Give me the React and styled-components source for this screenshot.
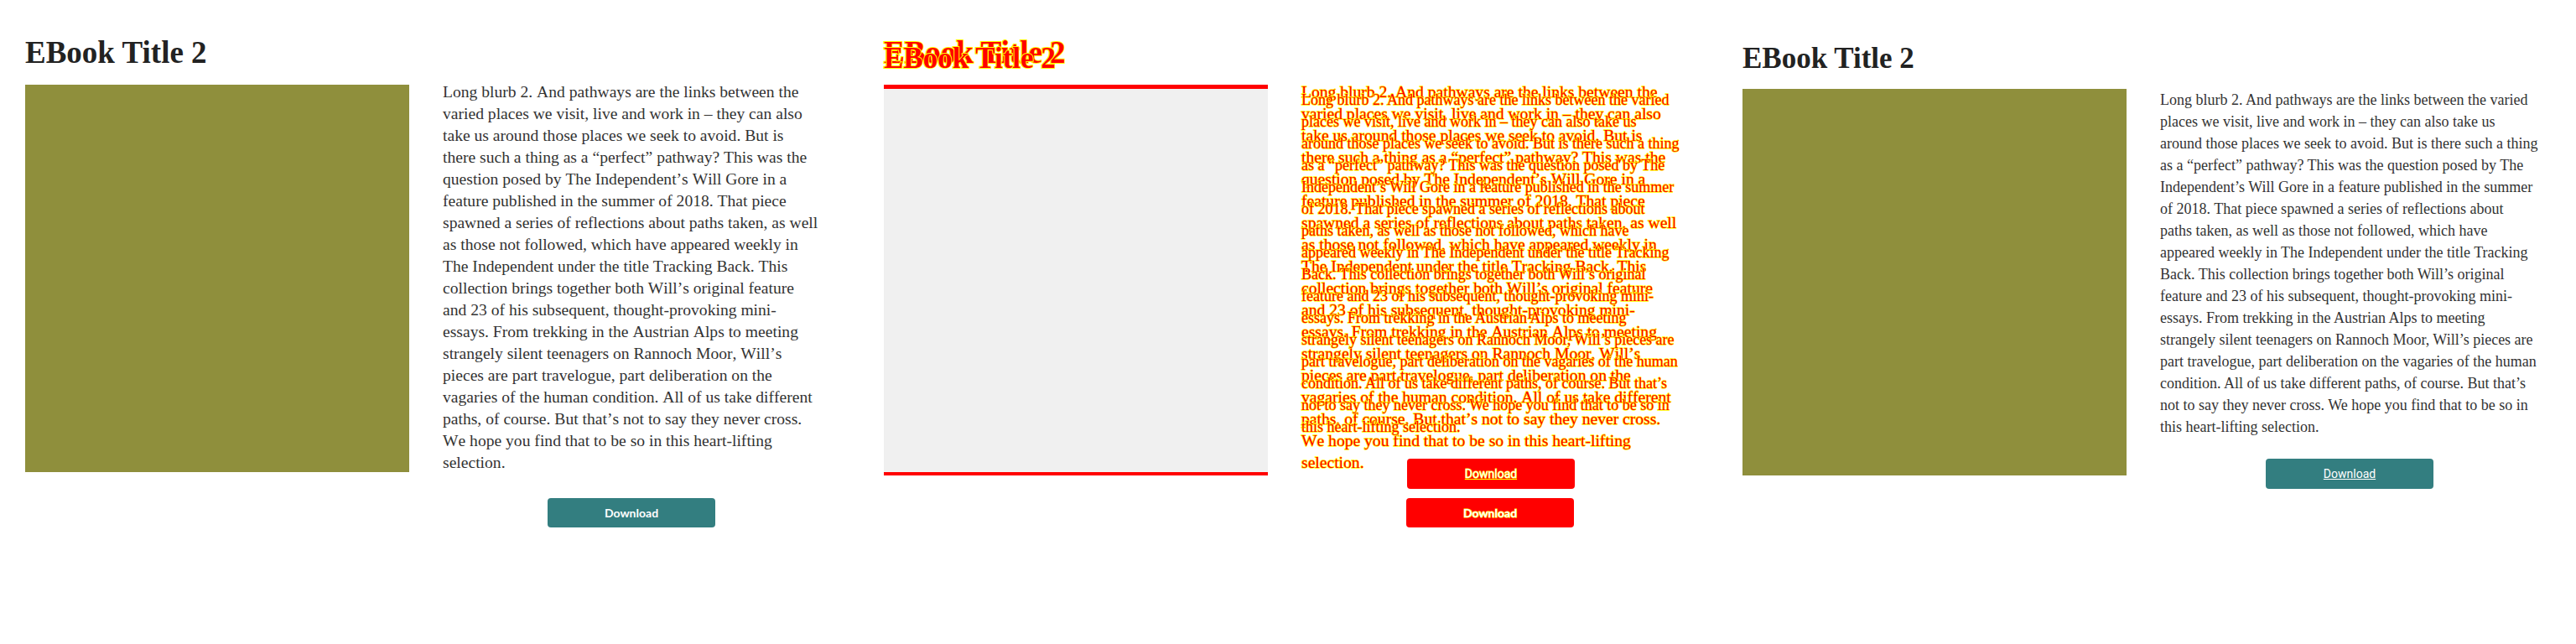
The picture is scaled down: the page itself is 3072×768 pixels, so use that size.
import styled, { createGlobalStyle, css } from "styled-components";

const GlobalStyle = createGlobalStyle`
  html, body {
    margin: 0;
    padding: 0;
    background: #ffffff;
  }
  body {
    width: 3072px;
    height: 768px;
    overflow: hidden;
  }
`;

const BLURB =
  "Long blurb 2. And pathways are the links between the varied places we visit, live and work in \u2013 they can also take us around those places we seek to avoid. But is there such a thing as a \u201cperfect\u201d pathway? This was the question posed by The Independent\u2019s Will Gore in a feature published in the summer of 2018. That piece spawned a series of reflections about paths taken, as well as those not followed, which have appeared weekly in The Independent under the title Tracking Back. This collection brings together both Will\u2019s original feature and 23 of his subsequent, thought-provoking mini-essays. From trekking in the Austrian Alps to meeting strangely silent teenagers on Rannoch Moor, Will\u2019s pieces are part travelogue, part deliberation on the vagaries of the human condition. All of us take different paths, of course. But that\u2019s not to say they never cross. We hope you find that to be so in this heart-lifting selection.";

// per-version measurements (expected = styled page, actual = unstyled fallback)
const look = {
  expected: {
    top: 44,
    titleSize: 37,
    titleGap: 20,
    titleSpacing: "0px",
    column: 450,
    blurbFont: '"Liberation Serif", "Times New Roman", serif',
    blurbSize: "19.6px",
    blurbKerning: "none",
    blurbShift: -4,
    coverHeight: 462,
    buttonFont: 'Lato, "Liberation Sans", sans-serif',
    buttonWeight: 700,
    buttonHeight: 35,
    underline: false,
  },
  actual: {
    top: 52,
    titleSize: 35,
    titleGap: 19,
    titleSpacing: "0px",
    column: 452,
    blurbFont: '"Liberation Serif", "Times New Roman", serif',
    blurbSize: "18px",
    blurbKerning: "auto",
    blurbShift: 0,
    coverHeight: 461,
    buttonFont: 'Roboto, "Liberation Sans", sans-serif',
    buttonWeight: 400,
    buttonHeight: 36,
    underline: true,
  },
};

const diffInk = css`
  color: #ff0000;
  -webkit-text-stroke: ${({ $stroke }) => $stroke || "1.4px"} #ffff00;
  paint-order: stroke fill;
`;

const Screen = styled.main`
  display: flex;
  width: 3072px;
  height: 768px;
  background: #ffffff;
`;

const Panel = styled.section`
  flex: none;
  width: 1024px;
  height: 768px;
  box-sizing: border-box;
  padding-left: 30px;
  display: grid;
  grid-template-columns: 1fr;
  align-items: start;
  overflow: hidden;
`;

// in the diff panel both versions sit in the same grid cell
const Layer = styled.div`
  grid-area: 1 / 1;
  padding-top: ${({ $v }) => look[$v].top}px;
`;

const Title = styled.h1`
  margin: 0 0 ${({ $v }) => look[$v].titleGap}px;
  font-family: "Liberation Serif", "Times New Roman", serif;
  font-weight: 700;
  font-size: ${({ $v }) => look[$v].titleSize}px;
  letter-spacing: ${({ $v }) => look[$v].titleSpacing};
  line-height: 1;
  color: #222222;
  ${({ $diff }) => $diff && diffInk}
`;

const Body = styled.div`
  display: grid;
  grid-template-columns: 458px ${({ $v }) => look[$v].column}px;
  column-gap: 40px;
  align-items: start;
`;

const Cover = styled.div`
  height: ${({ $v }) => look[$v].coverHeight}px;
  background: #8f8f3c;
`;

const DiffCover = styled.div`
  height: 457px;
  border-top: 5px solid #ff0000;
  border-bottom: 4px solid #ff0000;
  background: #f0f0f0;
`;

const Details = styled.div`
  display: flex;
  flex-direction: column;
`;

const Blurb = styled.p`
  margin: ${({ $v }) => look[$v].blurbShift}px 0 0;
  font-family: ${({ $v }) => look[$v].blurbFont};
  font-size: ${({ $v }) => look[$v].blurbSize};
  font-kerning: ${({ $v }) => look[$v].blurbKerning};
  line-height: 26px;
  color: #333333;
  ${({ $diff }) => $diff && diffInk}
`;

const DownloadButton = styled.a`
  align-self: center;
  margin-top: ${({ $v }) => 25 - look[$v].blurbShift}px;
  width: 200px;
  height: ${({ $v }) => look[$v].buttonHeight}px;
  display: flex;
  align-items: center;
  justify-content: center;
  border-radius: 4px;
  background: ${({ $diff }) => ($diff ? "#ff0000" : "#337e80")};
  color: #ffffff;
  font-family: ${({ $v }) => look[$v].buttonFont};
  font-weight: ${({ $v }) => look[$v].buttonWeight};
  font-size: 14px;
  text-decoration: ${({ $v }) => (look[$v].underline ? "underline" : "none")};
  ${({ $diff }) =>
    $diff &&
    css`
      -webkit-text-stroke: 1px #ffff00;
      paint-order: stroke fill;
    `}
`;

const Version = ({ v, diff, cover }) => (
  <Layer $v={v}>
    <Title $v={v} $diff={diff} $stroke="2px">
      EBook Title 2
    </Title>
    <Body $v={v}>
      {cover}
      <Details>
        <Blurb $v={v} $diff={diff}>
          {BLURB}
        </Blurb>
        <DownloadButton href="#" $v={v} $diff={diff}>
          Download
        </DownloadButton>
      </Details>
    </Body>
  </Layer>
);

const App = () => (
  <>
    <GlobalStyle />
    <Screen>
      <Panel>
        <Version v="expected" cover={<Cover $v="expected" />} />
      </Panel>
      <Panel>
        <Version v="expected" diff cover={<DiffCover />} />
        <Version v="actual" diff cover={<div />} />
      </Panel>
      <Panel>
        <Version v="actual" cover={<Cover $v="actual" />} />
      </Panel>
    </Screen>
  </>
);

export default App;
